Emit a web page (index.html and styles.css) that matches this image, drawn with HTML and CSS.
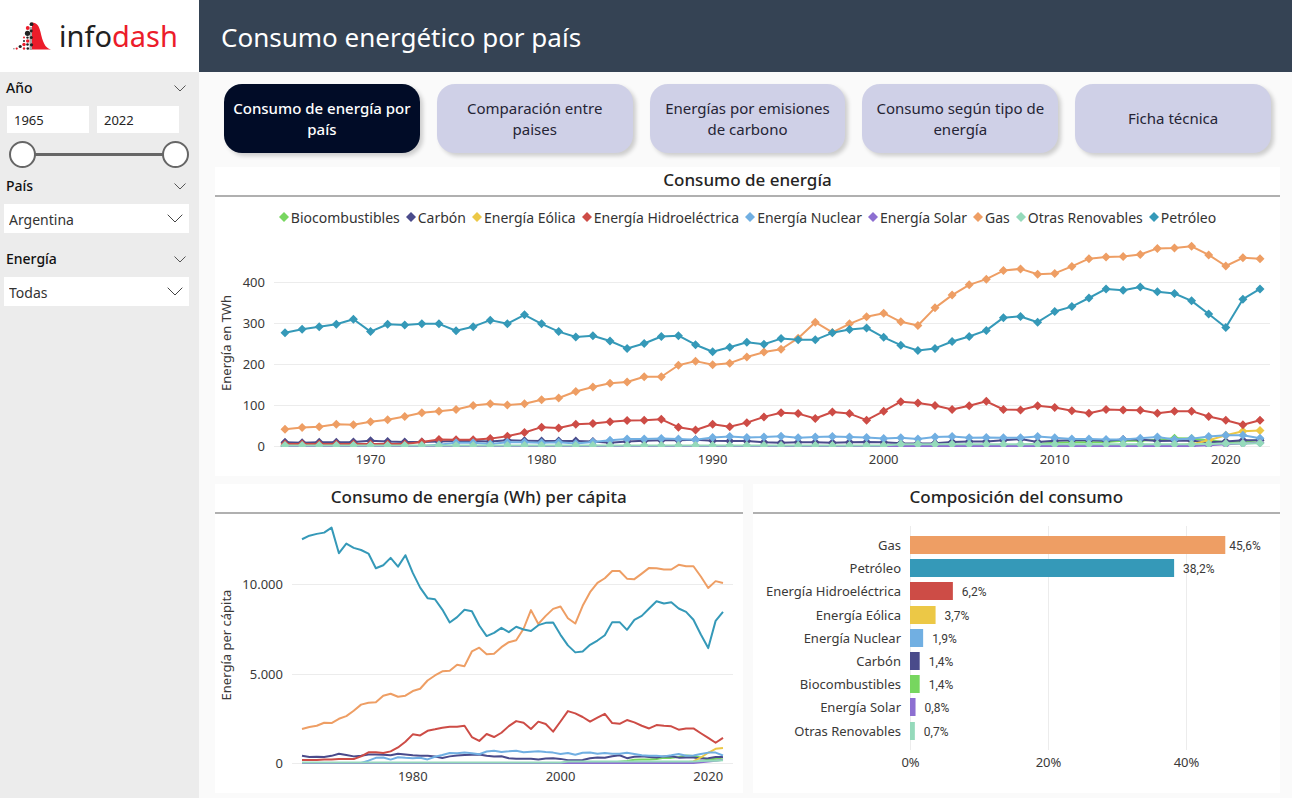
FILE: index.html
```html
<!DOCTYPE html>
<html lang="es">
<head>
<meta charset="utf-8">
<title>Consumo energético por país</title>
<link rel="stylesheet" href="styles.css">
</head>
<body>
<div class="app">
  <aside class="sidebar">
    <div class="brand">
      <svg class="brand-mark" viewBox="0 0 38 28" aria-hidden="true">
        <path d="M19 0.5c5 0 7 3.500 8.500 9.500 2 9 4.500 16.500 10.500 17.500H19z" fill="#ec1c2a"/>
        <path d="M16.500 5h2.500v23h-2.500z" fill="#aaa"/>
        <g fill="#222">
          <circle cx="18.500" cy="2.200" r="1.900"/><circle cx="14.500" cy="11.300" r="2.600"/><circle cx="18.300" cy="9" r="1.400"/><circle cx="18.300" cy="15.500" r="1.500"/><circle cx="7.200" cy="24.500" r="1.600"/><circle cx="14.500" cy="22.500" r="1.300"/><circle cx="14.500" cy="15.600" r="1.200"/><circle cx="18.500" cy="22.800" r="1.600"/><circle cx="14.800" cy="26.500" r="1.300"/><circle cx="11" cy="19" r="1"/>
        </g>
        <g fill="#ec1c2a">
          <circle cx="14.700" cy="6" r="1.900"/><circle cx="11" cy="15.500" r="1"/><circle cx="14.700" cy="19" r="1.700"/><circle cx="11" cy="22.500" r="1.700"/><circle cx="11" cy="26.500" r="1.200"/><circle cx="3.700" cy="26.600" r="1.100"/>
        </g>
        <circle cx="0.900" cy="26.800" r="0.700" fill="#777"/>
      </svg>
      <span class="brand-name">info<span class="brand-accent">dash</span></span>
    </div>
    <form class="filters">
      <div class="filter" role="group" aria-label="Rango de años">
        <button class="filter-head" type="button">Año<svg class="chev" viewBox="0 0 12 7"><path d="M0.500 0.500l5.500 5.500 5.500-5.500"/></svg></button>
        <div class="years">
          <input class="year" type="text" value="1965" aria-label="Año inicial">
          <input class="year" type="text" value="2022" aria-label="Año final">
        </div>
        <div class="slider">
          <input type="range" min="1965" max="2022" value="1965" aria-label="Desde">
          <input type="range" min="1965" max="2022" value="2022" aria-label="Hasta">
        </div>
      </div>
      <div class="filter">
        <button class="filter-head" type="button">País<svg class="chev" viewBox="0 0 12 7"><path d="M0.500 0.500l5.500 5.500 5.500-5.500"/></svg></button>
        <div class="select-box">
          <select aria-label="País"><option>Argentina</option></select>
          <svg class="select-chev" viewBox="0 0 16 9"><path d="M0.700 0.700l7.300 7.300 7.300-7.300"/></svg>
        </div>
      </div>
      <div class="filter">
        <button class="filter-head" type="button">Energía<svg class="chev" viewBox="0 0 12 7"><path d="M0.500 0.500l5.500 5.500 5.500-5.500"/></svg></button>
        <div class="select-box">
          <select aria-label="Energía"><option>Todas</option></select>
          <svg class="select-chev" viewBox="0 0 16 9"><path d="M0.700 0.700l7.300 7.300 7.300-7.300"/></svg>
        </div>
      </div>
    </form>
  </aside>
  <div class="content">
    <header class="topbar"><h1>Consumo energético por país</h1></header>
    <nav class="tabs">
      <button class="tab active" type="button">Consumo de energía por país</button>
      <button class="tab" type="button">Comparación entre paises</button>
      <button class="tab" type="button">Energías por emisiones de carbono</button>
      <button class="tab" type="button">Consumo según tipo de energía</button>
      <button class="tab" type="button">Ficha técnica</button>
    </nav>
    <main class="panels">
      <section class="panel wide">
        <h2>Consumo de energía</h2>
        <ul class="legend" id="legend"></ul>
        <svg class="chart chart-total" id="total"></svg>
      </section>
      <section class="panel">
        <h2>Consumo de energía (Wh) per cápita</h2>
        <svg class="chart chart-small" id="percapita"></svg>
      </section>
      <section class="panel">
        <h2>Composición del consumo</h2>
        <svg class="chart chart-small" id="share"></svg>
      </section>
    </main>
  </div>
</div>
<script src="charts.js"></script>
</body>
</html>
```

FILE: styles.css
```css
* { box-sizing: border-box; }
body {
  margin: 0;
  background: #fafafa;
  color: #252423;
  font-family: "Noto Sans", "Open Sans", sans-serif;
  font-size: 14px;
}
button, input, select { font: inherit; color: inherit; }
.app { display: grid; grid-template-columns: 199px 1fr; min-height: 100vh; }

.sidebar { background: #ececec; }
.brand { display: flex; align-items: center; gap: 8px; height: 72px; padding-left: 13px; background: #fff; }
.brand-mark { width: 38px; height: 28px; flex: none; }
.brand-name { font-family: "Noto Sans", sans-serif; font-size: 29px; font-weight: 400; line-height: 36px; color: #222; }
.brand-accent { color: #ec1c2a; }

.filters { padding: 5px 10px 0 4px; }
.filter-head {
  display: flex; align-items: center; justify-content: space-between;
  width: 100%; height: 22px; padding: 0 3px 0 2px;
  border: 0; background: none; color: #111; text-align: left;
  font-weight: 500; line-height: 20px;
}
.chev { width: 12px; height: 7px; fill: none; stroke: #555; }
.years { display: flex; gap: 8px; padding: 7px 10px 0 3px; }
.year { flex: 1; min-width: 0; height: 27px; padding: 0 7px; border: 0; background: #fff; font-size: 13px; }
.slider { display: grid; margin: 7px 0 7px 5px; height: 28px; }
.slider input {
  grid-area: 1 / 1; width: 100%; height: 28px; margin: 0;
  appearance: none; background: none; pointer-events: none;
}
.slider input::-webkit-slider-runnable-track {
  height: 3px;
  background: linear-gradient(#666, #666) center / calc(100% - 24px) 100% no-repeat;
}
.slider input::-webkit-slider-thumb {
  appearance: none; width: 27px; height: 27px; margin-top: -12px;
  border: 2px solid #666; border-radius: 50%; background: #fff; pointer-events: auto;
}
.slider input:last-child::-webkit-slider-runnable-track { background: none; }
.select-box { display: grid; align-items: center; margin: 7px 0 15px; }
.select-box select {
  grid-area: 1 / 1; width: 100%; height: 29px; padding: 1px 5px 0;
  border: 0; border-radius: 0; background: #fff; appearance: none; color: #333;
}
.select-chev { grid-area: 1 / 1; justify-self: end; width: 16px; height: 9px; margin-right: 6px; fill: none; stroke: #444; pointer-events: none; }

.content { display: flex; flex-direction: column; min-width: 0; }
.topbar { display: flex; align-items: center; height: 72px; padding: 2px 22px 0; background: #354354; }
.topbar h1 { margin: 0; color: #fff; font-size: 26px; font-weight: 400; line-height: 36px; }
.tabs { display: grid; grid-template-columns: repeat(5, 1fr); gap: 17px; padding: 12px 21px 0 25px; }
.tab {
  height: 69px; padding: 0 8px; border: 0; border-radius: 18px;
  background: #cfd0e7; color: #252435; font-size: 15px; line-height: 21px;
  box-shadow: 3px 3px 4px rgba(0, 0, 0, .18);
}
.tab.active { background: #010c27; color: #fff; font-weight: 500; }
.panels { flex: 1; display: grid; grid-template-columns: 1fr 1fr; grid-template-rows: auto 1fr; gap: 8px 10px; padding: 14px 12px 5px 16px; }
.panel { min-width: 0; background: #fff; }
.wide { grid-column: 1 / -1; }
.panel h2 {
  margin: 0; height: 30px; border-bottom: 2px solid #b0b0b0;
  text-align: center; font-size: 17px; font-weight: 500; line-height: 26px;
}
.legend {
  display: flex; justify-content: center; align-items: center; gap: 6px;
  height: 40px; margin: 0; padding: 0; list-style: none; white-space: nowrap; color: #333;
}
.legend li { display: flex; align-items: center; gap: 2px; }
.legend svg { width: 10px; height: 10px; }
.chart { display: block; width: 100%; }
.chart-total { height: 239px; }
.chart-small { height: 279px; }
.chart text { fill: #3a3938; font-size: 13px; }
.chart .data-label { font-family: Roboto, sans-serif; font-size: 12px; }
.grid-line { stroke: #ececec; stroke-width: 1; }
```

FILE: charts.js
```js
const colors = {
  bio: '#77d65f', carbon: '#4a4b8b', eolica: '#ecc846', hidro: '#cd4c46', nuclear: '#71afe2',
  solar: '#8d6fd1', gas: '#ee9e64', otras: '#95dabb', petroleo: '#3599b8'
};
const names = {
  bio: 'Biocombustibles', carbon: 'Carbón', eolica: 'Energía Eólica', hidro: 'Energía Hidroeléctrica',
  nuclear: 'Energía Nuclear', solar: 'Energía Solar', gas: 'Gas', otras: 'Otras Renovables', petroleo: 'Petróleo'
};
const zeros = n => Array(n).fill(0);

// TWh per year, 1965-2022
const total = {
  bio: [...zeros(42), 1, 3, 5, 8, 9, 9, 10, 13, 13, 15, 19, 18, 14, 9, 11, 14],
  carbon: [9,8,9,9,10,13,11,10,10,11,12,12,11,14,13,12,12,12,11,8,11,13,14,14,15,13,12,12,9,8,9,9,8,9,10,9,7,6,7,10,11,11,14,17,10,13,14,14,13,16,16,12,13,13,9,11,14,14],
  eolica: [...zeros(46), 1, 1, 1, 2, 2, 2, 2, 4, 14, 26, 36, 38],
  hidro: [5,5,5,5,5,5,5,5,10,16,15,15,18,24,33,46,44,53,55,59,62,63,65,46,39,53,47,57,71,81,79,67,83,79,63,85,108,105,99,89,98,109,89,88,98,94,86,80,89,88,87,80,85,85,72,63,52,63],
  nuclear: [...zeros(9),3,8,8,5,9,9,8,9,6,10,14,17,17,18,17,15,21,23,21,22,24,20,22,23,22,21,18,20,17,22,23,20,21,20,20,23,20,17,17,16,16,19,22,16,18,23,26,26,19],
  solar: [...zeros(54), 2, 4, 6, 8],
  gas: [41,45,47,53,52,59,64,72,81,85,89,99,103,100,103,113,117,133,144,153,156,169,169,197,207,198,202,217,229,236,263,302,277,298,315,324,303,294,337,368,393,407,428,432,419,421,438,457,461,462,467,482,483,487,466,439,459,457],
  otras: [...Array(36).fill(1), ...Array(17).fill(4), 4, 5, 6, 6, 7],
  petroleo: [276,285,291,297,309,279,297,295,298,298,281,291,307,298,320,298,279,266,269,256,238,250,267,269,247,230,241,253,248,262,259,259,276,284,288,265,246,233,238,255,267,282,313,316,302,328,340,361,383,380,388,376,372,354,322,289,358,383]
};
const scaled = list => list.map(v => v * 22);
const perCapita = {
  bio: scaled(total.bio),
  carbon: [400,340,350,340,400,520,450,370,400,480,470,460,430,520,480,430,400,400,360,280,370,420,450,460,480,400,360,380,270,240,240,240,200,250,270,230,160,150,170,270,310,290,380,430,270,350,370,340,310,370,380,300,310,310,250,270,330,330],
  eolica: scaled(total.eolica),
  hidro: [170,170,170,200,190,220,220,220,370,600,600,560,650,870,1190,1600,1540,1800,1880,1970,2030,2030,2080,1450,1230,1620,1450,1690,2060,2340,2250,1900,2310,2180,1750,2320,2900,2770,2570,2310,2530,2750,2230,2190,2400,2270,2080,1930,2120,2080,2050,1860,1930,1930,1660,1400,1130,1400],
  nuclear: [...zeros(9),130,290,310,190,320,290,270,290,200,350,450,560,550,590,540,490,640,680,620,650,690,600,630,650,610,580,500,560,460,570,590,520,560,520,520,570,500,430,410,400,370,430,500,400,420,500,580,580,420],
  solar: scaled(total.solar),
  gas: [1900,2010,2080,2250,2230,2470,2620,2920,3260,3370,3400,3760,3870,3700,3760,4020,4150,4610,4890,5120,5150,5490,5410,6230,6440,6080,6100,6470,6750,6860,7500,8540,7770,8220,8610,8740,8090,7790,8780,9540,10060,10320,10730,10730,10300,10270,10580,10900,10880,10810,10810,11070,10990,10990,10420,9780,10160,10060],
  otras: scaled(total.otras),
  petroleo: [12500,12700,12800,12870,13150,11720,12260,12020,11900,11700,10880,11050,11460,10970,11610,10620,9800,9210,9150,8570,7850,8150,8560,8480,7680,7090,7270,7550,7310,7610,7460,7370,7700,7830,7850,7160,6570,6180,6230,6600,6840,7140,7870,7870,7440,8000,8220,8630,9040,8910,8980,8630,8440,8000,7180,6420,7940,8440]
};
const share = [
  ['gas', 45.6], ['petroleo', 38.2], ['hidro', 6.2], ['eolica', 3.7], ['nuclear', 1.9],
  ['carbon', 1.4], ['bio', 1.4], ['solar', 0.8], ['otras', 0.7]
];
const order = ['bio', 'carbon', 'eolica', 'hidro', 'nuclear', 'solar', 'gas', 'otras', 'petroleo'];

const text = (x, y, s, anchor, cls = '') =>
  `<text x="${x}" y="${y}" text-anchor="${anchor}" dominant-baseline="central" class="${cls}">${s}</text>`;
const line = (x1, y1, x2, y2) => `<line class="grid-line" x1="${x1}" y1="${y1}" x2="${x2}" y2="${y2}"/>`;

function lineChart(id, data, o) {
  const svg = document.getElementById(id);
  const w = svg.clientWidth;
  const x = i => o.first + i * (w - o.last - o.first) / 57;
  const y = v => o.base - v * o.scale;
  let out = `<clipPath id="${id}-clip"><rect width="${w}" height="${o.base + 1}"/></clipPath>`;
  for (const t of o.ticks) {
    out += line(o.left, Math.round(y(t)) + .5, w - o.right, Math.round(y(t)) + .5);
    out += text(o.left - o.tickGap, Math.round(y(t)), t >= 1000 ? t / 1000 + '.000' : t, 'end');
  }
  for (const t of o.years) out += text(x(t - 1965), o.base + 13, t, 'middle');
  out += `<text transform="translate(11 ${o.titleY}) rotate(-90)" text-anchor="middle" dominant-baseline="central">${o.title}</text>`;
  out += `<g clip-path="url(#${id}-clip)">`;
  for (const k of order) {
    const pts = data[k].map((v, i) => [x(i), y(v)]);
    out += `<polyline points="${pts.map(p => p.join()).join(' ')}" fill="none" stroke="${colors[k]}" stroke-width="2" stroke-linejoin="round"/>`;
    if (o.markers) out += `<path fill="${colors[k]}" d="${pts.map(p => `M${p[0]} ${p[1] - 4.5}l4.500 4.500-4.500 4.500-4.500-4.500z`).join('')}"/>`;
  }
  svg.innerHTML = out + '</g>';
}

function barChart() {
  const svg = document.getElementById('share');
  const w = svg.clientWidth;
  const left = 157;
  const unit = (w - left - 17) / 51.200;
  let out = '';
  for (const t of [0, 20, 40]) {
    const px = Math.floor(left + t * unit) + .5;
    out += line(px, 12, px, 236) + text(px, 248, t + '%', 'middle');
  }
  share.forEach(([k, v], i) => {
    const cy = 31 + i * 23.200;
    const end = left + v * unit;
    out += `<rect x="${left}" y="${Math.round(cy - 9)}" width="${v * unit}" height="18" fill="${colors[k]}"/>`;
    out += text(left - 9, cy, names[k], 'end');
    out += text(end + (w - end < 60 ? 4 : 9), cy + 1, v.toFixed(1).replace('.', ',') + '%', 'start', 'data-label');
  });
  svg.innerHTML = out;
}

function render() {
  lineChart('total', total, { first: 70, last: 20, left: 59, right: 10, tickGap: 9, base: 209, scale: .41,
    ticks: [0, 100, 200, 300, 400], years: [1970, 1980, 1990, 2000, 2010, 2020], title: 'Energía en TWh', titleY: 106, markers: true });
  lineChart('percapita', perCapita, { first: 87, last: 20, left: 77, right: 10, tickGap: 9, base: 249, scale: .0179,
    ticks: [0, 5000, 10000], years: [1980, 2000, 2020], title: 'Energía per cápita', titleY: 131 });
  barChart();
}

document.getElementById('legend').innerHTML = order.map(k =>
  `<li><svg viewBox="0 0 10 10"><path d="M5 0l5 5-5 5-5-5z" fill="${colors[k]}"/></svg>${names[k]}</li>`).join('');
render();
addEventListener('resize', render);
```
